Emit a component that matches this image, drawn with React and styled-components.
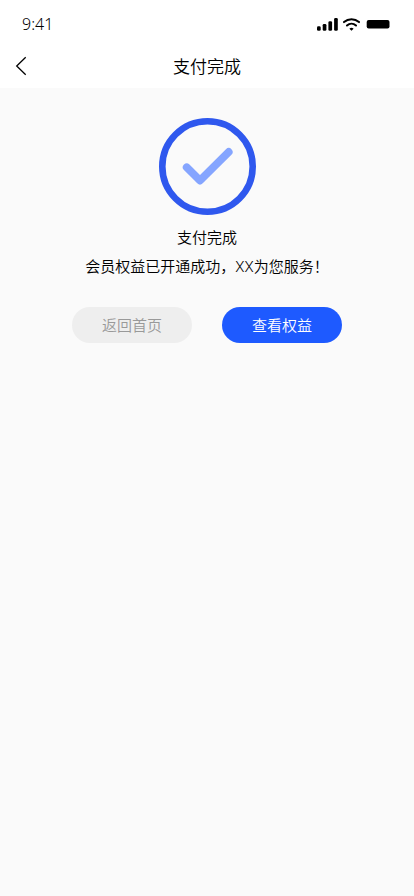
import React from "react";
import styled, { createGlobalStyle } from "styled-components";

const GlobalStyle = createGlobalStyle`
  * { box-sizing: border-box; }
  body {
    margin: 0;
    background: #fafafa;
    color: #000;
    font-family: Roboto, "Noto Sans CJK SC", sans-serif;
    font-weight: 350;
  }
`;

const Header = styled.header`
  background: #fff;
`;

const StatusBar = styled.div`
  display: flex;
  align-items: center;
  justify-content: space-between;
  height: 44px;
  padding: 4px 24px 0 22px;
`;

const Time = styled.time`
  font-family: "Noto Sans", sans-serif;
  font-size: 16px;
  line-height: 20px;
`;

const StatusIcons = styled.div`
  display: flex;
  align-items: center;
  gap: 5px;
`;

const NavBar = styled.nav`
  display: grid;
  grid-template-columns: 44px 1fr 44px;
  align-items: center;
  height: 44px;
`;

const BackButton = styled.button`
  display: flex;
  align-items: center;
  height: 44px;
  padding: 0 0 0 15px;
  border: 0;
  background: none;
  color: inherit;
  cursor: pointer;
`;

const Title = styled.h1`
  margin: 0;
  padding-top: 2px;
  font-size: 17px;
  line-height: 24px;
  font-weight: inherit;
  text-align: center;
`;

const Result = styled.main`
  display: flex;
  flex-direction: column;
  align-items: center;
  padding: 30px 16px;
`;

const Status = styled.h2`
  margin: 12px 0 0;
  font-size: 15px;
  line-height: 22px;
  font-weight: inherit;
`;

const Message = styled.p`
  margin: 7px 0 0;
  font-size: 15px;
  line-height: 22px;
`;

const Actions = styled.div`
  display: flex;
  gap: 30px;
  margin-top: 29px;
`;

const ActionButton = styled.button`
  width: 120px;
  height: 36px;
  padding: 2px 0 0;
  border: 0;
  border-radius: 18px;
  background: ${(p) => (p.$primary ? "#1e5aff" : "#eee")};
  color: ${(p) => (p.$primary ? "#fff" : "#999")};
  font-family: inherit;
  font-weight: inherit;
  font-size: 15px;
  line-height: 22px;
  cursor: pointer;
`;

export default function App() {
  return (
    <>
      <GlobalStyle />
      <Header>
        <StatusBar>
          <Time>9:41</Time>
          <StatusIcons>
            <svg width="21" height="13" viewBox="0 0 21 13" aria-hidden="true">
              <rect x="0" y="8.3" width="3.7" height="4.5" rx="1.3" />
              <rect x="5.7" y="6" width="3.7" height="6.8" rx="1.3" />
              <rect x="11.4" y="3.3" width="3.7" height="9.5" rx="1.3" />
              <rect x="17.1" y="0" width="3.7" height="12.8" rx="1.3" />
            </svg>
            <svg width="18" height="13" viewBox="0 0 18 13" fill="none" stroke="#000" strokeWidth="2" strokeLinecap="round" aria-hidden="true">
              <path d="M1 4.1a11.6 11.6 0 0 1 15 0M4 7.5a6.8 6.8 0 0 1 9 0" />
              <path d="M8.5 12.7 6.4 10.8a2.9 2.9 0 0 1 4.2 0Z" fill="#000" stroke="none" />
            </svg>
            <svg width="24" height="9" viewBox="0 0 24 9" aria-hidden="true">
              <rect x="0.7" width="22.8" height="8.5" rx="2" />
            </svg>
          </StatusIcons>
        </StatusBar>
        <NavBar>
          <BackButton type="button" aria-label="返回">
            <svg width="12" height="20" viewBox="0 0 12 20" fill="none" stroke="currentColor" strokeWidth="1.3" aria-hidden="true">
              <path d="m10.7 1.3-9 8.7 9 8.7" />
            </svg>
          </BackButton>
          <Title>支付完成</Title>
        </NavBar>
      </Header>
      <Result>
        <svg width="97" height="97" viewBox="0 0 97 97" fill="none" aria-hidden="true">
          <circle cx="48.5" cy="48.5" r="45.2" stroke="#2f58ee" strokeWidth="6.6" />
          <path d="m27.7 49.3 13.3 13.2 28.7-28.5" stroke="#85a5ff" strokeWidth="7.8" strokeLinecap="round" strokeLinejoin="round" />
        </svg>
        <Status>支付完成</Status>
        <Message>会员权益已开通成功，XX为您服务！</Message>
        <Actions>
          <ActionButton type="button">返回首页</ActionButton>
          <ActionButton type="button" $primary>查看权益</ActionButton>
        </Actions>
      </Result>
    </>
  );
}
